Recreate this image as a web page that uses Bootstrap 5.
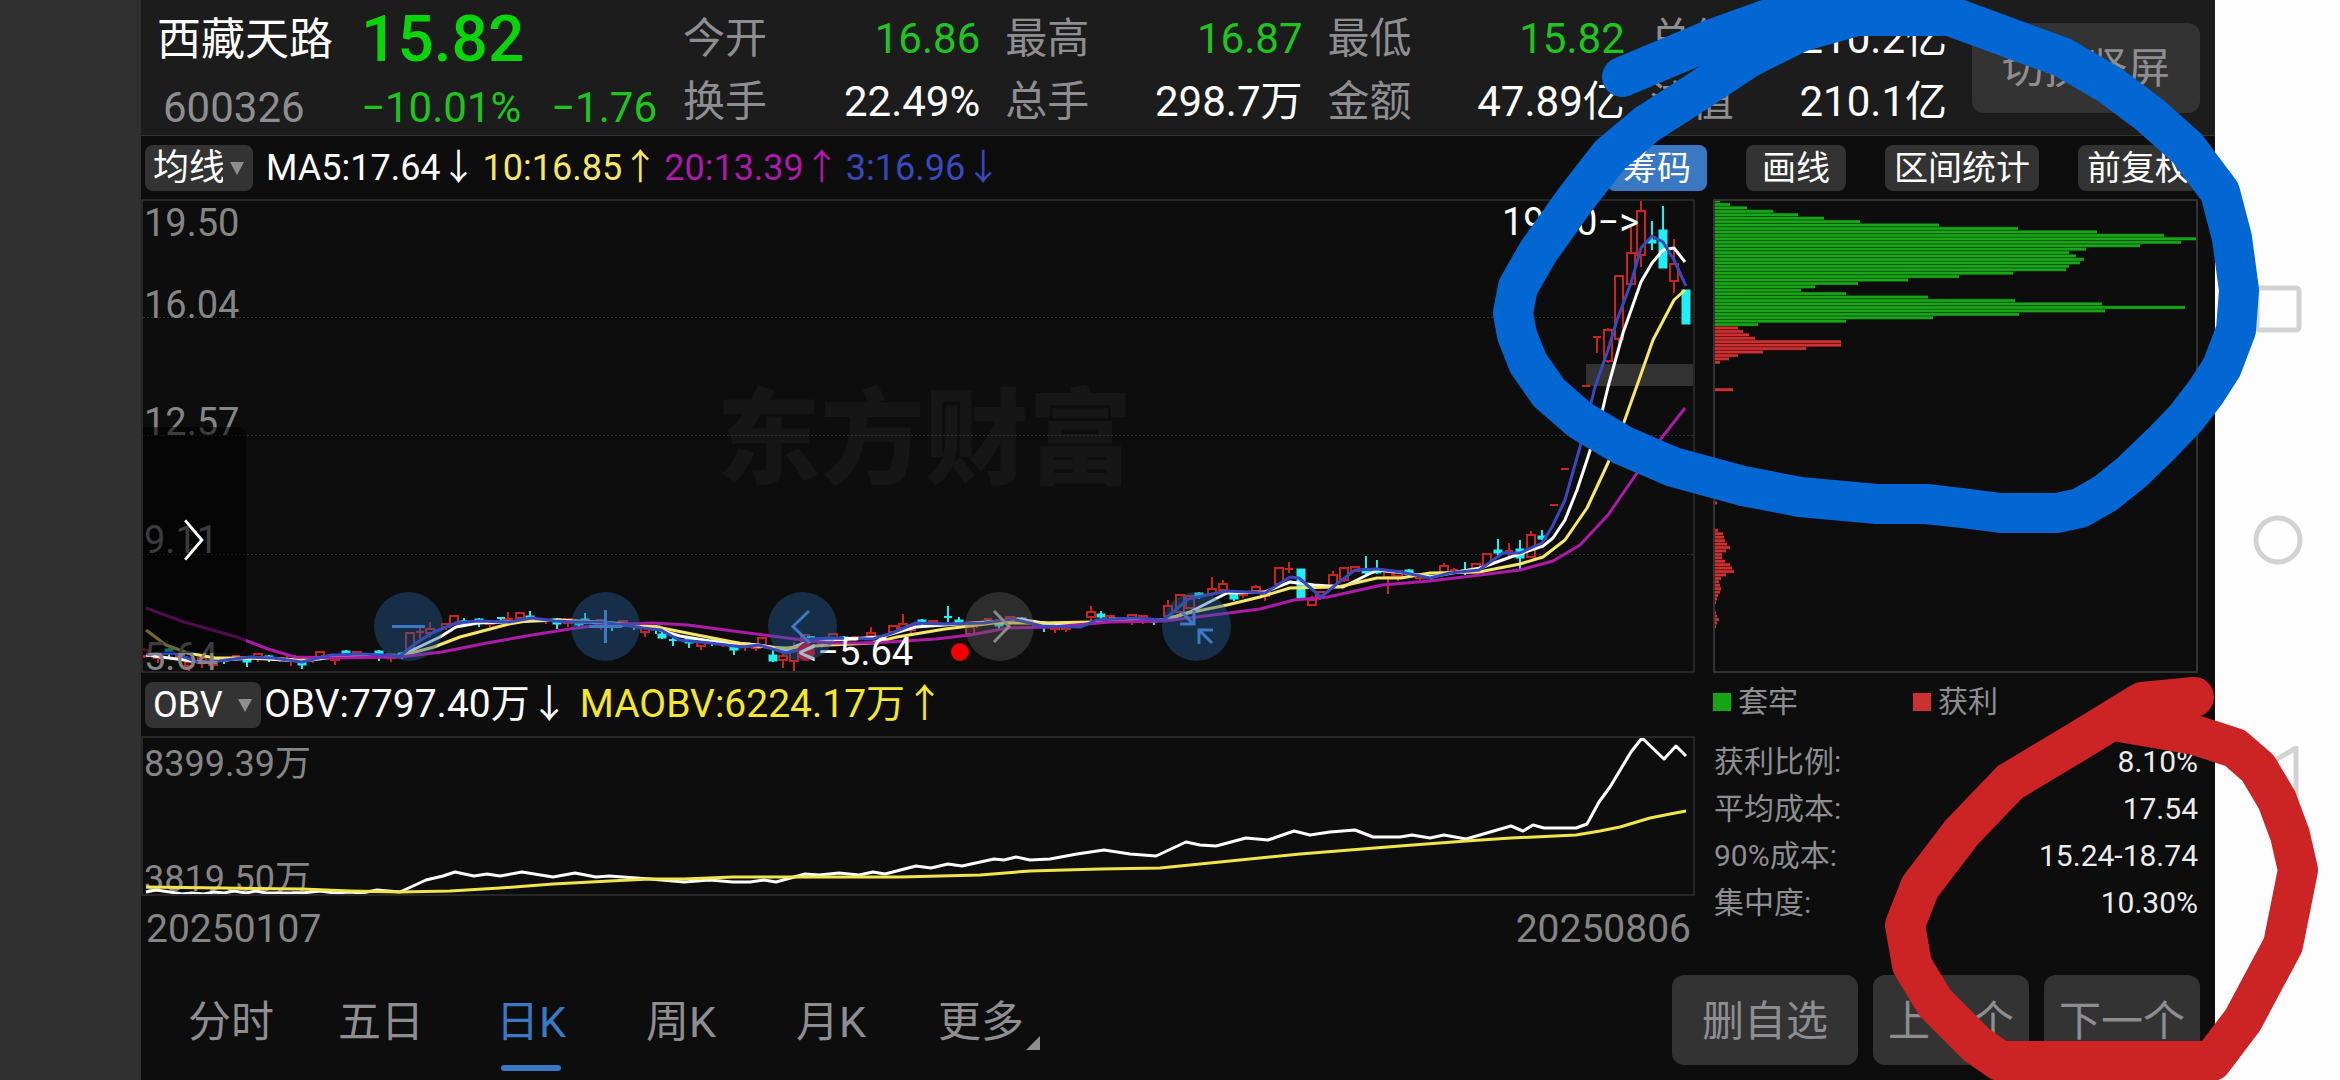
<!DOCTYPE html>
<html lang="zh-CN">
<head>
<meta charset="utf-8">
<meta name="viewport" content="width=device-width, initial-scale=1">
<title>西藏天路 600326</title>
<link href="https://cdn.jsdelivr.net/npm/bootstrap@5.3.0/dist/css/bootstrap.min.css" rel="stylesheet">
<style>
  body { font-family: Roboto, "Noto Sans CJK SC", sans-serif; background: #0d0d0d; color: #fff; line-height: 1; }
  .side-strip { width: 141px; background: #303030; }
  .sysnav { width: 125px; background: #fdfdfd; gap: 181px; }
  .sysnav button { width: 50px; height: 50px; background: none; border: 0; padding: 0; }
  .sysnav svg { display: block; fill: none; stroke: #d2d2d2; stroke-width: 5; }
  .app { min-width: 0; background: #0d0d0d; }
  .t-dim { color: #8e8e92; }
  .t-down { color: #1fc41f; }

  .quote-head { height: 136px; background: #1c1c1c; border-bottom: 1px solid #343434; font-size: 42px; padding-right: 15px; }
  .quote-id { width: 542px; padding: 2px 26px 0 16px; }
  .quote-id > div { height: 60px; }
  .quote-id > div:first-child { height: 76px; }
  .quote-id .first-col { width: 204px; }
  .quote-id .stock-name { font-size: 44px; }
  .quote-id .stock-code { padding-left: 6px; }
  .quote-id .last-price { font-size: 64px; font-weight: 500; color: #0ad50a; }
  .stat-list { gap: 25px; padding: 7px 25px 0 0; }
  .stat-list dl { flex: 1 1 0; margin: 0; }
  .stat-list dl > div { height: 63px; }
  .stat-list dt { font-weight: 400; }
  .stat-list dd { margin: 0; }
  .btn-tile { background: #333; color: #8e8e92; font-size: 42px; line-height: 1; border: 0; border-radius: 12px; padding: 3px 15px 0; height: 90px; white-space: nowrap; }
  .btn-tile:hover { background: #3c3c3c; color: #aaa; }
  .btn-wide { padding: 3px 30px 0; }

  .tool-row { height: 63px; font-size: 36px; padding: 0 17px 0 4px; }
  .ma-list { gap: 6px; padding-left: 13px; }
  .obv-row { height: 63px; font-size: 39px; padding-left: 4px; }
  .obv-list { gap: 11px; padding-left: 3px; }
  .pick { position: relative; color: #8e8e92; }
  .pick select { appearance: none; background: #333; color: #fff; border: 0; border-radius: 8px; height: 46px; font-size: 36px; line-height: 46px; padding: 0 30px 0 8px; width: 108px; }
  .pick.pick-obv select { width: 116px; }
  .pick::after { content: ""; position: absolute; right: 9px; top: 17px; border: 7px solid transparent; border-top: 13px solid #8e8e92; border-bottom: 0; pointer-events: none; }
  .tool-btns { gap: 39px; }
  .btn-tool { min-width: 100px; height: 46px; padding: 0 9px; font-size: 34px; line-height: 1; border: 0; border-radius: 8px; background: #333; color: #fff; white-space: nowrap; }
  .btn-tool.active, .btn-tool:hover { background: #3a78c4 !important; color: #fff !important; }
  .ma10 { color: #f6e66a; } .ma20 { color: #ab1ba6; } .ma3 { color: #3a48be; } .maobv { color: #f5e62f; }

  .col-right { width: 502px; padding: 0 17px 0 0; margin-left: 18px; }
  .plot { position: relative; border: 2px solid #262626; }
  .plot svg { display: block; width: 100%; height: 100%; }
  .plot-k { height: 474px; } .plot-obv { height: 160px; }
  .plot-chip { height: 474px; border-color: #333; }
  .axis { position: absolute; inset: 0; padding-left: 1px; color: #858585; font-size: 38px; line-height: 27px; }
  .axis > div { flex: 1 1 0; }
  .axis .axis-top { padding-top: 9px; }
  .axis-obv { font-size: 36px; padding-top: 11px; line-height: 30px; }
  .brand-mark { position: absolute; left: 37%; top: 40%; font-size: 104px; font-weight: 900; color: #161616; }
  .flag-low { position: absolute; left: 42%; bottom: 0; padding-left: 4px; font-size: 38px; }
  .flag-high { position: absolute; right: 54px; top: 2px; font-size: 38px; }
  .drawer { position: absolute; left: 0; top: 226px; width: 103px; height: 226px; background: rgba(0,0,0,.55); border: 0; border-radius: 0 8px 8px 0; padding: 0; }
  .drawer svg { width: 100%; fill: none; stroke: #fff; stroke-width: 3; }
  .pads { position: absolute; left: 231px; top: 391px; gap: 128px; }
  .pads button { width: 69px; height: 69px; border-radius: 50%; border: 0; padding: 0; background: rgba(38,92,158,.42); }
  .pads button.off { background: rgba(96,96,96,.4); }
  .pads svg { fill: none; stroke: #3d79c4; stroke-width: 3; }
  .pads .off svg { stroke: #8a8a8a; }
  .date-row { height: 64px; padding: 2px 4px 0 5px; font-size: 39px; color: #858585; }
  .legend-row { height: 57px; font-size: 30px; padding-top: 1px; }
  .legend-row > div { width: 200px; gap: 7px; }
  .swatch { width: 18px; height: 18px; }
  .chip-facts { font-size: 30px; margin: 8px 0 0; padding-left: 1px; }
  .chip-facts > div { height: 47px; }
  .chip-facts dt { font-weight: 400; } .chip-facts dd { margin: 0; color: #ececec; }

  .foot { height: 120px; padding: 0 15px; }
  .period a { position: relative; width: 150px; height: 120px; padding-top: 4px; font-size: 43px; color: #8e8e92; text-decoration: none; }
  .period a.active { color: #3a78c4; }
  .period a.active::after { content: ""; position: absolute; left: 45px; bottom: 9px; width: 60px; height: 6px; border-radius: 3px; background: #3a78c4; }
  .period a.more::after { content: ""; position: absolute; right: 16px; bottom: 30px; border: 7px solid #8e8e92; border-top-color: transparent; border-left-color: transparent; }
  .foot-btns { gap: 15px; }
  .ink { position: absolute; inset: 0; width: 100%; height: 100%; pointer-events: none; fill: none; stroke-width: 40; stroke-linecap: round; stroke-linejoin: round; }
</style>
<script src="https://cdn.jsdelivr.net/npm/bootstrap@5.3.0/dist/js/bootstrap.bundle.min.js"></script>
</head>
<body>
<div class="d-flex min-vh-100 position-relative overflow-hidden">
  <div class="side-strip flex-shrink-0"></div>

  <main class="app flex-grow-1 d-flex flex-column">
    <header class="quote-head d-flex align-items-start">
      <div class="quote-id flex-shrink-0">
        <div class="d-flex align-items-center"><span class="first-col stock-name">西藏天路</span><span class="last-price">15.82</span></div>
        <div class="d-flex align-items-center t-down"><span class="first-col stock-code t-dim">600326</span><span>−10.01%</span><span class="ms-auto">−1.76</span></div>
      </div>
      <div class="stat-list d-flex flex-grow-1">
        <dl>
          <div class="d-flex justify-content-between align-items-center"><dt class="t-dim">今开</dt><dd class="t-down">16.86</dd></div>
          <div class="d-flex justify-content-between align-items-center"><dt class="t-dim">换手</dt><dd>22.49%</dd></div>
        </dl>
        <dl>
          <div class="d-flex justify-content-between align-items-center"><dt class="t-dim">最高</dt><dd class="t-down">16.87</dd></div>
          <div class="d-flex justify-content-between align-items-center"><dt class="t-dim">总手</dt><dd>298.7万</dd></div>
        </dl>
        <dl>
          <div class="d-flex justify-content-between align-items-center"><dt class="t-dim">最低</dt><dd class="t-down">15.82</dd></div>
          <div class="d-flex justify-content-between align-items-center"><dt class="t-dim">金额</dt><dd>47.89亿</dd></div>
        </dl>
        <dl>
          <div class="d-flex justify-content-between align-items-center"><dt class="t-dim">总值</dt><dd>210.2亿</dd></div>
          <div class="d-flex justify-content-between align-items-center"><dt class="t-dim">流值</dt><dd>210.1亿</dd></div>
        </dl>
      </div>
      <button type="button" class="btn btn-tile btn-wide align-self-center">切换竖屏</button>
    </header>

    <div class="tool-row d-flex align-items-center justify-content-between">
      <div class="d-flex align-items-center">
        <label class="pick"><select aria-label="主图指标"><option>均线</option></select></label>
        <div class="ma-list d-flex"><span>MA5:17.64↓</span><span class="ma10">10:16.85↑</span><span class="ma20">20:13.39↑</span><span class="ma3">3:16.96↓</span></div>
      </div>
      <div class="tool-btns d-flex">
        <button type="button" class="btn btn-tool active">筹码</button>
        <button type="button" class="btn btn-tool">画线</button>
        <button type="button" class="btn btn-tool">区间统计</button>
        <button type="button" class="btn btn-tool">前复权</button>
      </div>
    </div>

    <div class="d-flex">
      <section class="flex-grow-1">
        <div class="plot plot-k">
          <span class="brand-mark">东方财富</span>
          <svg id="kline" class="position-relative" viewBox="143 201 1550 470" preserveAspectRatio="none"></svg>
          <div class="axis d-flex flex-column">
            <div class="d-flex flex-column justify-content-between"><span class="axis-top">19.50</span><span>16.04</span></div>
            <div class="d-flex align-items-end">12.57</div>
            <div class="d-flex align-items-end">9.11</div>
            <div class="d-flex align-items-end">5.64</div>
          </div>
          <span class="flag-low">&lt;−5.64</span>
          <span class="flag-high">19.50−&gt;</span>
          <button type="button" class="drawer" aria-label="展开"><svg viewBox="0 0 105 60"><path d="M43 10L60 30L43 50"/></svg></button>
          <div class="pads d-flex">
            <button type="button" aria-label="缩小"><svg width="69" height="69"><path d="M18 34.5H51"/></svg></button>
            <button type="button" aria-label="放大"><svg width="69" height="69"><path d="M18 34.5H51M34.5 18V51"/></svg></button>
            <button type="button" aria-label="向左"><svg width="69" height="69"><path d="M41 19L25 34.5L41 50"/></svg></button>
            <button type="button" class="off" aria-label="向右"><svg width="69" height="69"><path d="M29 19L44 34.5L29 50"/></svg></button>
            <button type="button" aria-label="收起"><svg width="69" height="69"><path d="M20 20L31 32M18 32H32V18M37 52V38H51M38 39L50 51"/></svg></button>
          </div>
        </div>
        <div class="obv-row d-flex align-items-center">
          <label class="pick pick-obv"><select aria-label="副图指标"><option>OBV</option></select></label>
          <div class="obv-list d-flex"><span>OBV:7797.40万↓</span><span class="maobv">MAOBV:6224.17万↑</span></div>
        </div>
        <div class="plot plot-obv">
          <div class="axis axis-obv d-flex flex-column justify-content-between"><span>8399.39万</span><span>3819.50万</span></div>
          <svg id="obv" viewBox="143 738 1550 156" preserveAspectRatio="none" class="position-relative"></svg>
        </div>
        <div class="date-row d-flex justify-content-between align-items-center"><span>20250107</span><span>20250806</span></div>
      </section>

      <section class="col-right flex-shrink-0">
        <div class="plot plot-chip"><svg id="chips" viewBox="1715 201 481 470" preserveAspectRatio="none"></svg></div>
        <div class="legend-row d-flex t-dim">
          <div class="d-flex align-items-center"><span class="swatch" style="background:#15a515"></span>套牢</div>
          <div class="d-flex align-items-center"><span class="swatch" style="background:#cb3131"></span>获利</div>
        </div>
        <dl class="chip-facts">
          <div class="d-flex justify-content-between align-items-center"><dt class="t-dim">获利比例:</dt><dd>8.10%</dd></div>
          <div class="d-flex justify-content-between align-items-center"><dt class="t-dim">平均成本:</dt><dd>17.54</dd></div>
          <div class="d-flex justify-content-between align-items-center"><dt class="t-dim">90%成本:</dt><dd>15.24-18.74</dd></div>
          <div class="d-flex justify-content-between align-items-center"><dt class="t-dim">集中度:</dt><dd>10.30%</dd></div>
        </dl>
      </section>
    </div>

    <footer class="foot d-flex align-items-center justify-content-between mt-auto">
      <nav class="period d-flex">
        <a href="#" class="d-flex align-items-center justify-content-center">分时</a>
        <a href="#" class="d-flex align-items-center justify-content-center">五日</a>
        <a href="#" class="d-flex align-items-center justify-content-center active">日K</a>
        <a href="#" class="d-flex align-items-center justify-content-center">周K</a>
        <a href="#" class="d-flex align-items-center justify-content-center">月K</a>
        <a href="#" class="d-flex align-items-center justify-content-center more">更多</a>
      </nav>
      <div class="foot-btns d-flex">
        <button type="button" class="btn btn-tile btn-wide">删自选</button>
        <button type="button" class="btn btn-tile">上一个</button>
        <button type="button" class="btn btn-tile">下一个</button>
      </div>
    </footer>
  </main>

  <nav class="sysnav flex-shrink-0 d-flex flex-column align-items-center justify-content-center">
    <button type="button" aria-label="最近任务"><svg width="50" height="50"><rect x="4" y="4" width="42" height="42" rx="3"/></svg></button>
    <button type="button" aria-label="主页"><svg width="50" height="50"><circle cx="25" cy="25" r="22"/></svg></button>
    <button type="button" aria-label="返回"><svg width="50" height="50"><path d="M43 2V48L4 25Z" stroke-linejoin="round"/></svg></button>
  </nav>

  <!-- freehand marker strokes drawn over the screen -->
  <svg class="ink" viewBox="0 0 2340 1080" preserveAspectRatio="none">
    <path stroke="#0267d2" d="M1622 77L1715 38L1782 14L1850 16H1950L2015 40L2062 57L2110 85L2150 115L2187 148L2220 192L2232 238L2239 290L2236 330L2222 367L2206 392L2186 418L2162 443L2132 472L2106 493L2080 508L2057 513H2001L1962 508L1926 504H1877L1800 497L1743 486L1673 467L1622 445L1580 420L1549 393L1528 363L1517 335L1513 313L1518 287L1538 252L1575 200L1610 155L1647 124L1700 90L1748 58L1800 32L1850 18"/>
    <path stroke="#cc2325" d="M2194 697L2142 702L2080 740L2010 782L1962 832L1920 887L1905 925L1912 965L1935 1003L1977 1045L2000 1061H2212L2243 1020L2283 945L2298 870L2290 835L2277 800L2258 768L2235 748L2195 735L2120 722L2160 712"/>
  </svg>
</div>

<script>
const NS = 'http://www.w3.org/2000/svg';
function add(svg, tag, attrs) {
  const el = document.createElementNS(NS, tag);
  for (const k in attrs) el.setAttribute(k, attrs[k]);
  svg.appendChild(el);
}
function line(svg, pts, color) {
  add(svg, 'polyline', { points: pts, fill: 'none', stroke: color, 'stroke-width': 3, 'stroke-linejoin': 'round' });
}

const k = document.getElementById('kline');
[317.5, 435.5, 554.5].forEach(y => add(k, 'path', { d: `M143 ${y}H1693`, stroke: '#333', 'stroke-width': 1, 'stroke-dasharray': '2 2' }));
add(k, 'rect', { x: 1586, y: 364, width: 110, height: 22, fill: '#333' });

const ma3 = '146,654 175,653 197,662 219,661 250,657 273,658 302,662 331,655 362,654 400,656 416,643 434,632 456,623 478,621 509,622 532,618 554,621 576,622 603,622 643,628 661,630 679,640 710,643 742,647 759,645 786,653 798,650 810,639 834,638 873,639 892,633 916,623 945,624 984,623 1013,619 1042,626 1081,627 1096,620 1134,618 1164,620 1188,599 1227,591 1265,593 1290,577 1299,578 1321,597 1338,583 1355,570 1377,569 1401,572 1430,578 1450,573 1479,570 1503,553 1520,553 1542,543 1552,527 1565,500 1580,447 1595,387 1608,350 1617,320 1631,283 1641,248 1652,236 1663,242 1674,260 1686,286';
const ma5 = '146,655 200,662 250,658 302,661 335,657 400,656 440,637 456,627 478,623 560,620 600,623 650,627 680,636 710,641 759,645 786,650 810,641 850,639 880,637 916,627 1000,621 1018,619 1050,624 1081,625 1110,619 1164,620 1190,612 1227,593 1265,592 1290,582 1314,585 1343,587 1377,570 1406,573 1430,577 1480,568 1508,558 1543,546 1553,538 1565,520 1577,490 1588,457 1602,412 1608,387 1623,333 1641,282 1652,263 1663,250 1674,248 1685,262';
const ma10 = '146,630 166,645 188,653 215,658 264,658 300,660 331,656 400,656 434,647 460,637 509,624 532,620 576,621 603,622 657,627 692,634 733,642 755,646 786,648 829,645 873,643 897,637 945,629 994,623 1042,623 1091,622 1164,620 1188,613 1227,605 1260,597 1290,588 1338,587 1377,578 1401,578 1430,573 1479,572 1520,564 1543,557 1565,540 1587,508 1608,463 1623,425 1640,377 1653,340 1674,300 1685,290';
const ma20 = '146,608 184,622 237,637 268,649 295,657 331,658 400,657 442,652 487,643 532,635 576,628 603,625 652,623 688,625 733,631 795,639 829,643 873,643 936,639 970,635 1008,628 1052,627 1110,622 1164,621 1197,617 1260,609 1294,600 1328,597 1382,585 1430,581 1480,575 1520,570 1553,561 1580,545 1608,515 1637,473 1660,440 1685,408';

// candles: x, body top, body bottom, wick top, wick bottom, rising
const bars = [
  [144,650,656,648,658,1],[189,662,666,660,671,1],[320,652,658,651,659,1],[410,633,650,633,652,1],[420,632,634,628,641,1],[430,629,633,622,637,1],[454,616,624,615,625,1],[464,621,624,618,626,0],
  [508,619,622,612,624,1],[520,613,618,612,619,1],[530,616,619,611,622,0],[585,619,622,613,624,0],[662,634,638,630,639,0],[673,640,642,636,646,0],[762,638,645,637,646,1],
  [773,655,661,648,662,0],[783,656,660,652,668,1],[794,650,661,642,672,1],[805,635,645,634,656,1],[871,633,636,627,640,1],[893,626,632,625,633,1],[903,624,628,614,630,1],[948,617,619,606,622,0],
  [959,620,623,617,625,0],[970,627,634,624,635,1],[1091,612,617,606,620,1],[1101,614,617,611,620,0],[1168,606,616,600,617,1],[1180,595,612,594,614,1],[1190,596,608,595,609,1],
  [1212,589,594,577,596,1],[1223,584,590,580,592,1],[1234,594,599,590,601,0],[1256,587,591,585,593,1],[1279,568,584,567,585,1],[1289,569,571,562,573,1],[1301,569,598,569,599,0],
  [1312,600,605,596,606,1],[1333,575,585,571,586,1],[1344,568,580,567,582,1],[1355,567,571,566,572,1],[1366,570,573,556,574,0],[1377,570,573,560,574,0],[1388,572,577,570,594,1],
  [1444,566,573,563,576,1],[1454,570,572,568,574,1],[1465,570,573,562,575,0],[1476,564,570,563,572,1],[1487,554,565,554,566,1],[1498,550,553,539,556,0],[1509,551,552,543,558,1],
  [1520,549,558,540,569,0],[1531,535,557,531,558,1],[1542,536,539,530,540,0],[1554,505,505,505,505,1],[1565,469,469,469,469,1],[1575,430,430,430,430,1],[1586,386,386,386,386,1],
  [1597,337,337,337,353,1],[1608,330,361,328,363,1],[1619,276,339,276,350,1],[1631,253,284,225,284,1],[1641,211,255,199,267,1],[1652,240,243,221,250,0],[1663,230,268,206,268,0],[1674,264,281,239,293,1],[1686,290,324,290,324,0]
];
const mid = ma3.split(' ').map(p => p.split(',').map(Number));
function level(x) {
  for (let i = 1; i < mid.length; i++) if (x <= mid[i][0]) {
    const [a, b] = mid[i - 1], [c, d] = mid[i];
    return b + (d - b) * (x - a) / (c - a);
  }
  return mid[mid.length - 1][1];
}
for (let i = 0; i < 126; i++) {
  const x = Math.round(147 + i * 11.07);
  if (bars.some(b => Math.abs(b[0] - x) < 6)) continue;
  const y = Math.round(level(x) + 2 * Math.sin(i * 2.3)), h = 2 + (i * 7) % 4;
  bars.push([x, y - 2, y - 2 + h, y - 3 - (i * 5) % 5, y + h + (i * 3) % 4, (i * 11) % 7 > 2 ? 1 : 0]);
}
bars.forEach(([x, t, b, hi, lo, up]) => {
  const c = up ? '#c92420' : '#20f0f4';
  if (b - t < 3) add(k, 'path', { d: `M${x - 4} ${t}H${x + 4}M${x} ${hi}V${lo}`, stroke: c, 'stroke-width': 2, fill: 'none' });
  else {
    add(k, 'path', { d: `M${x} ${hi}V${t}M${x} ${b}V${lo}`, stroke: c, 'stroke-width': 2 });
    add(k, 'rect', { x: x - 4, y: t, width: 8, height: b - t, stroke: c, 'stroke-width': up ? 2 : 1, fill: up ? 'none' : c });
  }
});
line(k, ma5, '#fff'); line(k, ma10, '#f6e66a'); line(k, ma20, '#ab1ba6'); line(k, ma3, '#3a48be');
add(k, 'circle', { cx: 806, cy: 652, r: 9, fill: '#f00000' });
add(k, 'circle', { cx: 960, cy: 652, r: 9, fill: '#f00000' });

const o = document.getElementById('obv');
line(o, '146,892 156,890 170,892 182,894 192,893 204,894 214,892 224,893 234,891 246,893 256,891 266,893 280,893 302,893 320,891 335,893 350,892 362,893 377,890 400,892 426,880 443,876 455,872 474,876 487,874 500,876 522,872 553,877 575,873 596,877 609,876 650,879 684,882 710,880 733,882 750,882 764,880 776,882 805,874 819,875 839,873 859,875 873,872 885,874 916,866 931,868 948,864 962,866 994,859 1004,860 1016,857 1030,860 1050,859 1077,854 1104,850 1130,854 1156,856 1186,842 1200,845 1216,846 1246,838 1268,840 1294,831 1310,835 1330,832 1355,830 1373,837 1400,837 1412,835 1430,838 1444,835 1466,839 1511,826 1523,831 1533,825 1544,828 1576,828 1587,824 1599,802 1610,787 1631,752 1642,738 1664,759 1676,746 1686,756', '#fff');
line(o, '146,887 222,888 302,889 350,891 400,892 450,891 500,888 553,884 610,881 650,879 684,879 733,877 780,877 900,877 980,875 1030,871 1100,869 1160,868 1220,862 1300,854 1400,846 1466,841 1511,838 1576,835 1600,831 1620,827 1650,818 1670,814 1686,811', '#f2e54a');

// chip distribution, top price to bottom price, widths in plot units
const c = document.getElementById('chips');
const trapped = [6,16,33,59,84,110,146,225,304,383,450,482,467,426,372,355,362,370,366,355,352,299,245,194,144,101,87,132,214,301,388,471,391,305,219,132,44];
const profit = { 37:24,38:29,39:35,40:41,41:127,42:127,43:92,44:49,45:24,46:15,47:6,55:19,67:1,88:3,
  96:4,97:9,98:10,99:11,100:13,101:16,102:12,103:8,104:8,105:11,106:16,107:18,108:20,109:12,110:7,111:5,112:6,113:7,114:6,115:4,116:3,117:2,118:1,119:1,120:2,121:3,122:5,123:3,124:2,125:1,126:1,127:1,128:1 };
function chip(i, w, bright, dark) {
  const y = 199.3 + i * 3.43;
  add(c, 'rect', { x: 1714, y: y, width: w, height: 3.43, fill: dark });
  add(c, 'rect', { x: 1714, y: y + 0.6, width: w, height: 2.4, fill: bright });
}
trapped.forEach((w, i) => chip(i, w, '#1aa51a', '#0a6a0a'));
for (const i in profit) chip(+i, profit[i], '#c93333', '#8a1515');
</script>
</body>
</html>
